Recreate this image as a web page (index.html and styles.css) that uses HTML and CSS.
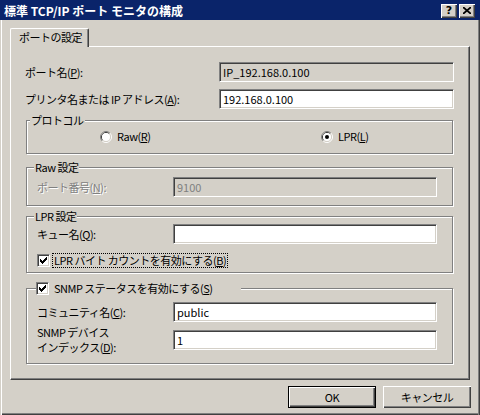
FILE: index.html
```html
<!DOCTYPE html>
<html lang="ja">
<head>
	<meta charset="UTF-8">
	<title>標準 TCP/IP ポート モニタの構成</title>
	<link rel="stylesheet" href="styles.css">
</head>
<body>
	<div id="dialog">
		<div class="caption">
			<span class="caption-text">標準 TCP/IP ポート モニタの構成</span>
			<span class="caption-btn help">?</span>
			<span class="caption-btn close">
				<svg width="8" height="7" viewBox="0 0 8 7"><path d="M0 0L8 7M8 0L0 7" stroke="#000" stroke-width="1.7"/></svg>
			</span>
		</div>
		<div class="client">
			<ul class="tabs">
				<li class="selected">ポートの設定</li>
			</ul>
			<div class="sheet">
				<div class="row">
					<label class="label">ポート名(<u>P</u>):</label>
					<div class="edit readonly">IP_192.168.0.100</div>
				</div>
				<div class="row second">
					<label class="label">プリンタ名または IP アドレス(<u>A</u>):</label>
					<div class="edit">192.168.0.100</div>
				</div>

				<!-- プロトコル -->
				<div class="group protocol">
					<span class="group-title">プロトコル</span>
					<label class="radio">
						<svg width="12" height="12" viewBox="0 0 12 12">
							<path d="M2.11 9.89A5.5 5.5 0 0 1 9.89 2.11" stroke="#808080" fill="none"/>
							<path d="M9.89 2.11A5.5 5.5 0 0 1 2.11 9.89" stroke="#fff" fill="none"/>
							<path d="M2.82 9.18A4.5 4.5 0 0 1 9.18 2.82" stroke="#404040" fill="none"/>
							<path d="M9.18 2.82A4.5 4.5 0 0 1 2.82 9.18" stroke="#d4d0c8" fill="none"/>
							<circle cx="6" cy="6" r="4" fill="#fff"/>
						</svg>
						<span>Raw(<u>R</u>)</span>
					</label>
					<label class="radio">
						<svg width="12" height="12" viewBox="0 0 12 12">
							<path d="M2.11 9.89A5.5 5.5 0 0 1 9.89 2.11" stroke="#808080" fill="none"/>
							<path d="M9.89 2.11A5.5 5.5 0 0 1 2.11 9.89" stroke="#fff" fill="none"/>
							<path d="M2.82 9.18A4.5 4.5 0 0 1 9.18 2.82" stroke="#404040" fill="none"/>
							<path d="M9.18 2.82A4.5 4.5 0 0 1 2.82 9.18" stroke="#d4d0c8" fill="none"/>
							<circle cx="6" cy="6" r="4" fill="#fff"/>
							<circle cx="6" cy="6" r="2" fill="#000"/>
						</svg>
						<span>LPR(<u>L</u>)</span>
					</label>
				</div>

				<!-- Raw 設定 -->
				<div class="group raw">
					<span class="group-title">Raw 設定</span>
					<div class="row">
						<label class="label disabled">ポート番号(<u>N</u>):</label>
						<div class="edit readonly disabled">9100</div>
					</div>
				</div>

				<!-- LPR 設定 -->
				<div class="group lpr">
					<span class="group-title">LPR 設定</span>
					<div class="row">
						<label class="label">キュー名(<u>Q</u>):</label>
						<div class="edit"></div>
					</div>
					<label class="checkbox">
						<span class="check">
							<svg width="9" height="9" viewBox="0 0 9 9"><path d="M1 3h1v3H1zM2 4h1v3H2zM3 5h1v3H3zM4 4h1v3H4zM5 3h1v3H5zM6 2h1v3H6zM7 1h1v3H7z" fill="#000"/></svg>
						</span>
						<span class="focus">LPR バイト カウントを有効にする(<u>B</u>)</span>
					</label>
				</div>

				<!-- SNMP -->
				<div class="group snmp">
					<label class="group-title checkbox">
						<span class="check">
							<svg width="9" height="9" viewBox="0 0 9 9"><path d="M1 3h1v3H1zM2 4h1v3H2zM3 5h1v3H3zM4 4h1v3H4zM5 3h1v3H5zM6 2h1v3H6zM7 1h1v3H7z" fill="#000"/></svg>
						</span>
						<span>SNMP ステータスを有効にする(<u>S</u>)</span>
					</label>
					<div class="row">
						<label class="label">コミュニティ名(<u>C</u>):</label>
						<div class="edit">public</div>
					</div>
					<div class="row second">
						<label class="label two-line">SNMP デバイス<br>インデックス(<u>D</u>):</label>
						<div class="edit">1</div>
					</div>
				</div>
			</div>

			<div class="buttons">
				<span class="button default">OK</span>
				<span class="button">キャンセル</span>
			</div>
		</div>
	</div>
</body>
</html>
```

FILE: styles.css
```css
*{
	margin: 0;
	padding: 0;
	box-sizing: border-box;
}
body{
	font-family: "Noto Sans CJK JP", sans-serif;
	font-size: 11px;
	line-height: 13px;
	color: #000;
	background: #d4d0c8;
}
u{
	text-underline-offset: 1px;
}

#dialog{
	width: 480px;
	height: 415px;
	display: flex;
	flex-direction: column;
	background: #d4d0c8;
}

/* タイトルバー */
.caption{
	height: 20px;
	display: flex;
	align-items: center;
	gap: 2px;
	padding: 1px 5px 0 4px;
	background: #0a246a;
	color: #fff;
}
.caption-text{
	flex: 1;
	font-size: 12px;
	font-weight: bold;
}
.caption-btn{
	width: 16px;
	height: 14px;
	display: flex;
	align-items: center;
	justify-content: center;
	background: #d4d0c8;
	color: #000;
	font: bold 11px/14px "DejaVu Sans", sans-serif;
	box-shadow: inset 1px 1px #fff, inset -1px -1px #404040, inset -2px -2px #808080;
}

.client{
	flex: 1;
	padding: 8px 10px 0 10px;
	letter-spacing: -0.5px;
	box-shadow: inset 1px 0 #d4d0c8, inset 2px 0 #fff,
		inset -1px 0 #404040, inset -2px 0 #808080,
		inset 0 -1px #404040, inset 0 -2px #808080;
}

/* タブ */
.tabs{
	list-style-type: none;
	display: flex;
}
.tabs li{
	position: relative;
	z-index: 1;
	width: 79px;
	height: 19px;
	margin-bottom: -1px;
	padding-left: 8px;
	line-height: 17px;
	background: #d4d0c8;
	border-top: 1px solid #fff;
	border-left: 1px solid #fff;
	border-right: 1px solid #404040;
	border-radius: 2px 2px 0 0;
	box-shadow: inset -1px 0 #808080;
}

.sheet{
	height: 334px;
	padding: 15px 15px 0 14px;
	border: 1px solid;
	border-color: #fff #404040 #404040 #fff;
	box-shadow: inset -1px -1px #808080;
	display: flex;
	flex-direction: column;
}

.row{
	display: flex;
	align-items: center;
}
.row.second{
	margin-top: 7px;
}
.label{
	flex: 1;
}
.label.disabled{
	color: #808080;
	text-shadow: 1px 1px #fff;
}

.edit{
	width: 235px;
	height: 20px;
	padding-left: 3px;
	line-height: 18px;
	letter-spacing: 0;
	background: #fff;
	border: 1px solid;
	border-color: #808080 #fff #fff #808080;
	box-shadow: inset 1px 1px #404040, inset -1px -1px #d4d0c8;
}
.edit.readonly{
	background: #d4d0c8;
}
.edit.disabled{
	color: #808080;
}

/* グループボックス */
.group{
	position: relative;
	margin: 0 1px;
	border: 1px solid #808080;
	box-shadow: inset 1px 1px #fff, 1px 1px #fff;
}
.group-title{
	position: absolute;
	top: -7px;
	left: 7px;
	padding: 0 1px;
	background: #d4d0c8;
}
.group .label{
	flex: none;
	width: 136px;
}
.group .edit{
	width: 264px;
}

.protocol{
	height: 34px;
	margin-top: 11px;
	padding: 8px 0 0 73px;
	display: grid;
	grid-template-columns: 221px auto;
	align-content: start;
}
.protocol .group-title{
	left: 3px;
}
.radio{
	display: flex;
	align-items: center;
	gap: 5px;
	height: 15px;
}

.raw{
	height: 39px;
	margin-top: 13px;
	padding: 9px 0 0 10px;
}

.lpr{
	height: 57px;
	margin-top: 10px;
	padding: 7px 0 0 10px;
}
.checkbox{
	display: flex;
	align-items: center;
	gap: 3px;
}
.lpr .checkbox{
	margin-top: 8px;
	height: 16px;
}
.focus{
	padding: 0 1px;
	outline: 1px dotted #000;
	outline-offset: 0;
}
.check{
	width: 13px;
	height: 13px;
	display: flex;
	align-items: center;
	justify-content: center;
	background: #fff;
	border: 1px solid;
	border-color: #808080 #fff #fff #808080;
	box-shadow: inset 1px 1px #404040, inset -1px -1px #d4d0c8;
}

.snmp{
	height: 76px;
	margin-top: 15px;
	padding: 13px 0 0 10px;
}
.snmp .group-title{
	top: -8px;
	left: 9px;
	width: 205px;
	height: 15px;
	padding: 0;
	gap: 5px;
}
.snmp .row.second{
	margin-top: 8px;
}
/* 2行ラベルは行の高さを変えない */
.label.two-line{
	line-height: 15px;
	margin: -5px 0;
}

/* ボタン */
.buttons{
	display: flex;
	justify-content: flex-end;
	gap: 7px;
	margin: 6px -1px 0 0;
}
.button{
	width: 88px;
	height: 22px;
	display: flex;
	align-items: center;
	justify-content: center;
	background: #d4d0c8;
	box-shadow: inset 1px 1px #fff, inset -1px -1px #404040, inset -2px -2px #808080;
}
.button.default{
	border: 1px solid #000;
}
```
